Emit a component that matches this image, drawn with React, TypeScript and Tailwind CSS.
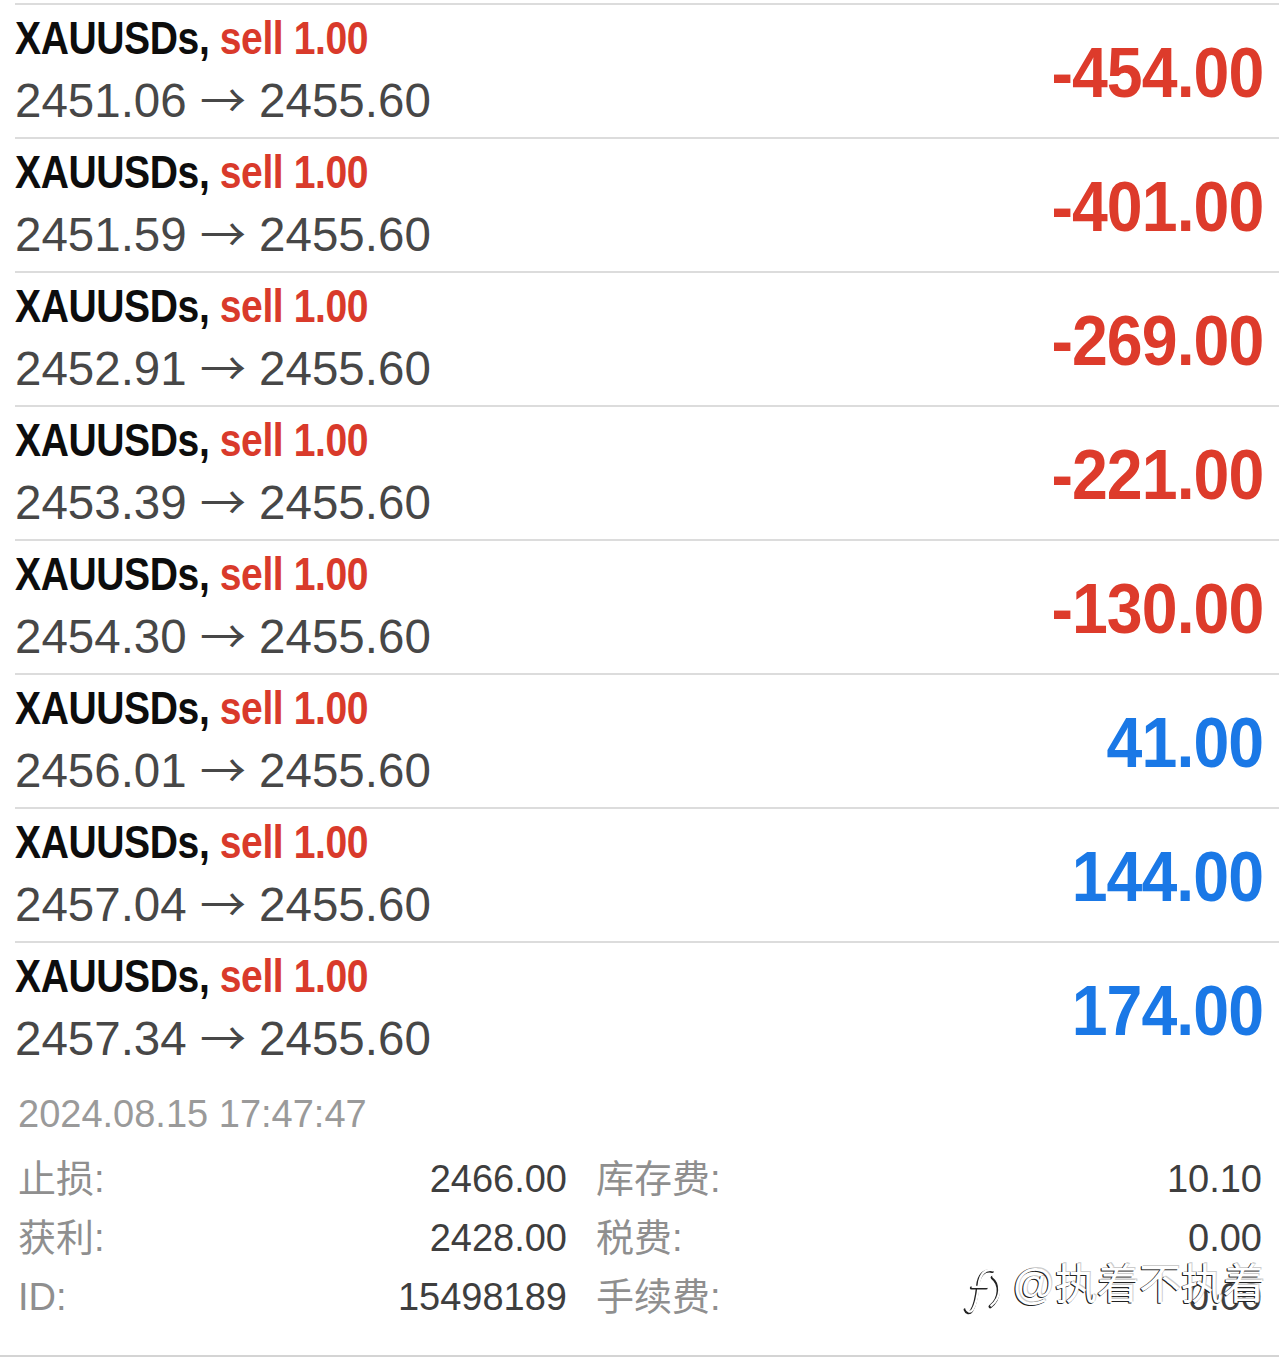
import React from "react";

const ROWS = [
  { open: "2451.06", profit: "-454.00" },
  { open: "2451.59", profit: "-401.00" },
  { open: "2452.91", profit: "-269.00" },
  { open: "2453.39", profit: "-221.00" },
  { open: "2454.30", profit: "-130.00" },
  { open: "2456.01", profit: "41.00" },
  { open: "2457.04", profit: "144.00" },
  { open: "2457.34", profit: "174.00" },
];

const sans = "font-['Liberation_Sans',Arial,sans-serif]";
const cjk = "font-['Liberation_Sans','Noto_Sans_CJK_SC',sans-serif]";

function TradeRow({ open, profit }: { open: string; profit: string }) {
  const loss = profit.startsWith("-");
  return (
    <div className="ml-[15px] h-[134px] border-t-2 border-[#dcdcdc] flex items-center justify-between pr-[16px]">
      <div className="flex flex-col">
        <div
          className={`${sans} font-bold text-[46px] leading-[62px] text-[#0d0d0d] tracking-[-0.5px] origin-left scale-x-[0.85] whitespace-nowrap`}
        >
          XAUUSDs, <span className="text-[#d93a2b]">sell 1.00</span>
        </div>
        <div className={`${sans} text-[47.5px] leading-[56px] mb-[6px] text-[#474747] whitespace-nowrap`}>
          {open}{" "}
          <span className="font-['Noto_Sans_CJK_SC',sans-serif] text-[46px]">→</span>{" "}
          2455.60
        </div>
      </div>
      <div
        className={`${sans} font-bold text-[70px] leading-none mt-[4px] tracking-[-1px] origin-right scale-x-[0.92] ${
          loss ? "text-[#dd3b2b]" : "text-[#1a78e6]"
        }`}
      >
        {profit}
      </div>
    </div>
  );
}

function Detail({ label, value }: { label: string; value: string }) {
  return (
    <div className="flex items-center justify-between h-[59px]">
      <span className={`${cjk} text-[38px] text-[#8f8f8f]`}>{label}</span>
      <span className={`${sans} text-[38px] text-[#3e3e3e]`}>{value}</span>
    </div>
  );
}

const LOGO_F = "M30 8 C22 6 17 12 16 22 C15 32 14 40 10 46 C8 49 5 48 4 45";
const LOGO_BAR = "M10 24 H24";
const LOGO_ARC = "M30 14 C38 20 38 34 28 42";

function Watermark() {
  return (
    <div className="absolute right-[14px] bottom-[44px] flex items-center gap-[2px] pointer-events-none">
      <svg width="50" height="54" viewBox="0 0 44 52" fill="none" className="mt-[8px]">
        {[LOGO_F, LOGO_BAR, LOGO_ARC].map((d) => (
          <g key={d}>
            <path d={d} stroke="#222" strokeWidth="3.2" strokeLinecap="round" transform="translate(-1 1)" />
            <path d={d} stroke="#fff" strokeWidth="2.2" strokeLinecap="round" />
          </g>
        ))}
      </svg>
      <span
        className={`${cjk} text-[42px] leading-none text-white [text-shadow:-1px_1px_0_#222,-1px_0_0_#444,1px_-1px_0_#ccc]`}
      >
        @执着不执着
      </span>
    </div>
  );
}

export default function App() {
  return (
    <div className="w-[1279px] h-[1360px] bg-white overflow-hidden relative pt-[3px]">
      {ROWS.map((r) => (
        <TradeRow key={r.open} open={r.open} profit={r.profit} />
      ))}
      <div className="pl-[18px] pr-[17px] pt-[19px] pb-[28px] border-b-2 border-[#d4d4d4]">
        <div className={`${sans} text-[38px] leading-[40px] text-[#9a9a9a] mb-[16px]`}>
          2024.08.15 17:47:47
        </div>
        <div className="grid grid-cols-[549px_1fr] gap-x-[29px]">
          <Detail label="止损:" value="2466.00" />
          <Detail label="库存费:" value="10.10" />
          <Detail label="获利:" value="2428.00" />
          <Detail label="税费:" value="0.00" />
          <Detail label="ID:" value="15498189" />
          <Detail label="手续费:" value="0.00" />
        </div>
      </div>
      <Watermark />
    </div>
  );
}
